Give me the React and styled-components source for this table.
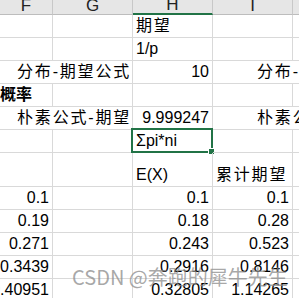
import React from "react";
import styled, { createGlobalStyle, css } from "styled-components";

const GlobalStyle = createGlobalStyle`
  html, body {
    margin: 0;
    padding: 0;
    background: #ffffff;
    overflow: hidden;
  }
  body {
    font-family: "Liberation Sans", "Noto Sans CJK SC", sans-serif;
    color: #000;
  }
`;

const Viewport = styled.div`
  position: relative;
  width: 299px;
  height: 298px;
  overflow: hidden;
`;

const Sheet = styled.div`
  display: grid;
  width: 373px;
  grid-template-columns: 53px 80px 80px 80px 80px;
  grid-template-rows: 15px repeat(6, 23px) 34px repeat(5, 23px);
`;

const Head = styled.div`
  box-sizing: border-box;
  background: #e6e6e6;
  border-right: 1px solid #c8c8c8;
  border-bottom: 1px solid #bdbdbd;
  display: flex;
  align-items: flex-end;
  justify-content: center;
  overflow: hidden;
  font-family: "Liberation Sans", sans-serif;
  font-size: 17px;
  line-height: 17px;
  color: #222;
  padding-bottom: 0px;
  ${(p) =>
    p.$active &&
    css`
      border-bottom: 2px solid #217346;
    `}
`;

const Cell = styled.div`
  box-sizing: border-box;
  position: relative;
  border-right: 1px solid #d9d9d9;
  border-bottom: 1px solid #d9d9d9;
  display: flex;
  align-items: flex-end;
  justify-content: ${(p) => (p.$align === "left" ? "flex-start" : "flex-end")};
  padding-bottom: 2px;
  padding-left: ${(p) => (p.$align === "left" && !p.$flush ? "3px" : "0")};
  padding-right: ${(p) =>
    p.$align === "left" ? "0" : p.$cjk ? "1px" : "3px"};
  grid-column: ${(p) => (p.$span ? `span ${p.$span}` : "auto")};
  font-size: 16px;
  line-height: 18px;
  letter-spacing: ${(p) => (p.$cjk ? "1.8px" : "0")};
  font-weight: ${(p) => (p.$bold ? 700 : 400)};
  white-space: nowrap;
  overflow: visible;
`;

/* the active-cell frame drawn over the grid */
const Selection = styled.div`
  position: absolute;
  left: -2px;
  top: -2px;
  right: -1px;
  bottom: -1px;
  border: 2px solid #217346;
  pointer-events: none;
`;

const FillHandle = styled.div`
  position: absolute;
  right: -4px;
  bottom: -4px;
  width: 5px;
  height: 5px;
  background: #217346;
  border: 1px solid #fff;
`;

const Watermark = styled.div`
  position: absolute;
  left: 72px;
  top: 266px;
  font-family: "Noto Sans CJK SC", sans-serif;
  font-size: 20px;
  line-height: 22px;
  color: rgba(140, 140, 140, 0.75);
  white-space: nowrap;
  pointer-events: none;
`;

const columns = ["F", "G", "H", "I", "J"];

const numbers = [
  ["0.1", "0.1", "0.1"],
  ["0.19", "0.18", "0.28"],
  ["0.271", "0.243", "0.523"],
  ["0.3439", "0.2916", "0.8146"],
  ["0.40951", "0.32805", "1.14265"],
];

export default function App() {
  return (
    <>
      <GlobalStyle />
      <Viewport>
        <Sheet>
          {columns.map((c) => (
            <Head key={c} $active={c === "H"}>
              {c}
            </Head>
          ))}

          <Cell />
          <Cell />
          <Cell $align="left" $cjk>
            期望
          </Cell>
          <Cell />
          <Cell />

          <Cell />
          <Cell />
          <Cell $align="left">1/p</Cell>
          <Cell />
          <Cell />

          <Cell $span={2} $cjk>
            分布-期望公式
          </Cell>
          <Cell>10</Cell>
          <Cell $span={2} $cjk>
            分布-期望公式
          </Cell>

          <Cell $align="left" $flush $bold>
            概率
          </Cell>
          <Cell />
          <Cell />
          <Cell />
          <Cell />

          <Cell $span={2} $cjk>
            朴素公式-期望
          </Cell>
          <Cell>9.999247</Cell>
          <Cell $span={2} $cjk>
            朴素公式-期望
          </Cell>

          <Cell />
          <Cell />
          <Cell $align="left">
            Σpi*ni
            <Selection>
              <FillHandle />
            </Selection>
          </Cell>
          <Cell />
          <Cell />

          <Cell />
          <Cell />
          <Cell $align="left">E(X)</Cell>
          <Cell $align="left" $cjk>
            累计期望
          </Cell>
          <Cell />

          {numbers.map((row, i) => (
            <React.Fragment key={i}>
              <Cell>{row[0]}</Cell>
              <Cell />
              <Cell>{row[1]}</Cell>
              <Cell>{row[2]}</Cell>
              <Cell />
            </React.Fragment>
          ))}
        </Sheet>
        <Watermark>CSDN @奔跑的犀牛先生</Watermark>
      </Viewport>
    </>
  );
}
